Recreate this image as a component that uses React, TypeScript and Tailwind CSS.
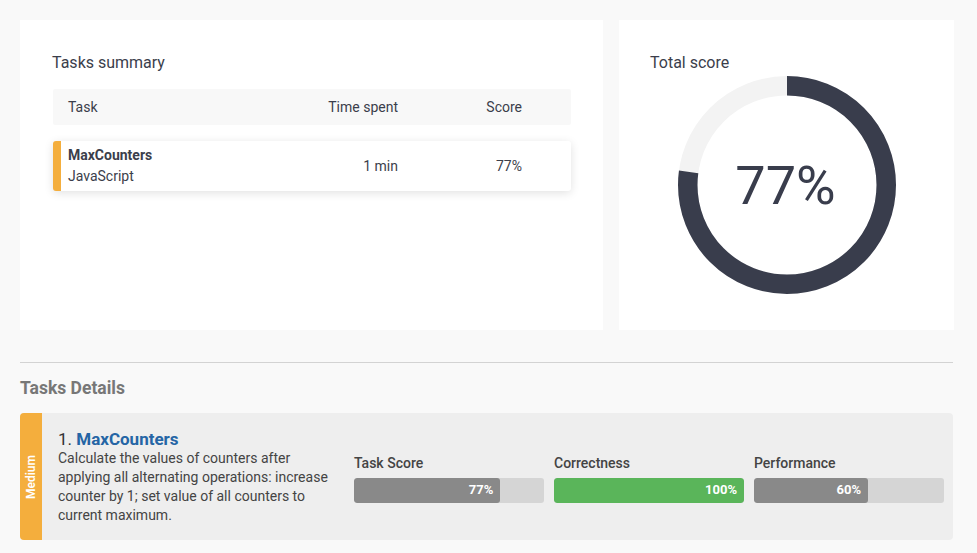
const font = "font-['Roboto','Liberation_Sans',sans-serif]";

const R = 99.25;
const C = 2 * Math.PI * R;

function Donut({ value }: { value: number }) {
  return (
    <div className="relative mx-auto h-[218px] w-[218px]">
      <svg width="218" height="218" viewBox="0 0 218 218" className="-rotate-90">
        <circle cx="109" cy="109" r={R} fill="none" stroke="#f3f3f3" strokeWidth="19.5" />
        <circle
          cx="109"
          cy="109"
          r={R}
          fill="none"
          stroke="#393d4c"
          strokeWidth="19.5"
          strokeDasharray={`${(C * value) / 100} ${C}`}
        />
      </svg>
      <div className="absolute inset-0 flex items-center justify-center pr-[2px] text-[54px] font-normal text-[#393d4c]">
        {value}%
      </div>
    </div>
  );
}

function ScoreBar({ label, value, green }: { label: string; value: number; green?: boolean }) {
  return (
    <div className="w-[190px]">
      <div className="mb-[6px] text-[14px] leading-[17px] font-medium text-[#444]">{label}</div>
      <div className="h-[25px] overflow-hidden rounded-[3px] bg-[#d5d5d5]">
        <div
          className={`flex h-full items-center justify-end rounded-[3px] pr-[7px] text-[13px] font-bold text-white ${green ? "bg-[#5ab55a]" : "bg-[#898989]"}`}
          style={{ width: `${value}%` }}
        >
          {value}%
        </div>
      </div>
    </div>
  );
}

export default function App() {
  return (
    <div className={`min-h-[553px] bg-[#f9f9f9] px-[20px] pt-[20px] pb-[13px] ${font}`}>
      <div className="flex w-[934px] gap-[16px]">
        <section className="h-[310px] w-[583px] bg-white px-[32px] pt-[33px] pl-[33px]">
          <h2 className="-ml-[1px] text-[16px] leading-[20px] text-[#3b3e4b]">Tasks summary</h2>
          <div className="mt-[16px] flex h-[36px] items-center rounded-[2px] bg-[#f8f8f8] pl-[15px] pr-[49px] text-[14px] text-[#3b3e4b]">
            <div className="flex-1">Task</div>
            <div className="w-[120px] text-right">Time spent</div>
            <div className="w-[124px] text-right">Score</div>
          </div>
          <div className="mt-[16px] flex h-[50px] items-center rounded-[3px] border-l-[8px] border-[#f4ae3d] bg-white pl-[7px] pr-[49px] text-[14px] text-[#3b3e4b] shadow-[0_2px_10px_rgba(0,0,0,0.12)]">
            <div className="flex-1 leading-[21px]">
              <div className="font-bold">MaxCounters</div>
              <div>JavaScript</div>
            </div>
            <div className="w-[120px] text-right">1 min</div>
            <div className="w-[124px] text-right">77%</div>
          </div>
        </section>

        <section className="h-[310px] w-[335px] bg-white pt-[33px]">
          <h2 className="pl-[31px] text-[16px] leading-[20px] text-[#3b3e4b]">Total score</h2>
          <div className="mt-[3px]">
            <Donut value={77} />
          </div>
        </section>
      </div>

      <div className="mt-[32px] h-px w-[933px] bg-[#d3d3d3]" />
      <h2 className="mt-[15px] text-[17.5px] leading-[20px] font-bold text-[#777]">Tasks Details</h2>

      <div className="mt-[15px] flex h-[127px] w-[933px] overflow-hidden rounded-[4px] bg-[#eeeeee]">
        <div className="flex w-[22px] shrink-0 items-center justify-center bg-[#f4ae3d]">
          <span className="-rotate-90 whitespace-nowrap text-[12px] font-semibold text-white">Medium</span>
        </div>
        <div className="flex items-center pl-[16px]">
          <div className="w-[284px]">
            <div className="text-[17px] leading-[20px] text-[#333]">
              1. <span className="font-bold text-[#2565a5]">MaxCounters</span>
            </div>
            <p className="text-[14px] leading-[19px] text-[#444]">
              Calculate the values of counters after applying all alternating operations: increase counter by 1; set
              value of all counters to current maximum.
            </p>
          </div>
          <div className="ml-[12px] flex gap-[10px] pt-[4px]">
            <ScoreBar label="Task Score" value={77} />
            <ScoreBar label="Correctness" value={100} green />
            <ScoreBar label="Performance" value={60} />
          </div>
        </div>
      </div>
    </div>
  );
}
